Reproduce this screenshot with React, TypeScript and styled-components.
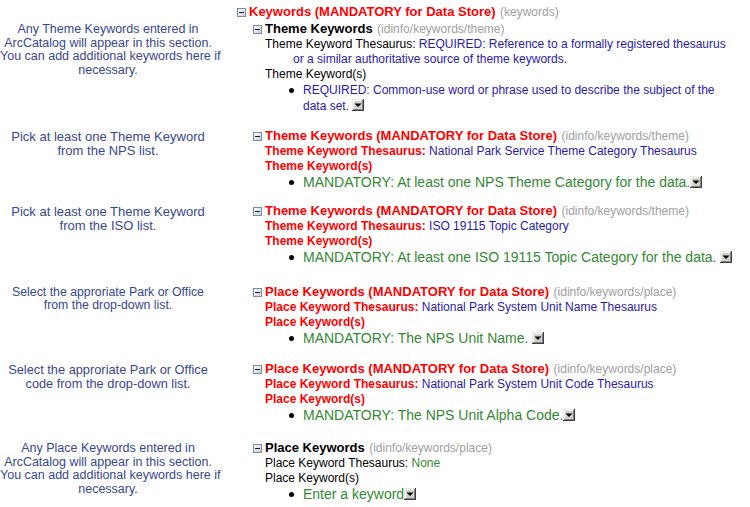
import React from "react";
import styled, { createGlobalStyle, css } from "styled-components";

type Tone = "red" | "blue" | "green" | "black" | "gray";

const tones: Record<Tone, string> = {
  red: "#ff0000",
  blue: "#2a1aa8",
  green: "#338833",
  black: "#000000",
  gray: "#a0a0a0",
};

const GlobalStyle = createGlobalStyle`
  body {
    margin: 0;
    background: #fff;
    font-family: "Liberation Sans", Arial, sans-serif;
  }
`;

const MinusBox: React.FC = () => (
  <MinusSvg width="9" height="9" viewBox="0 0 9 9">
    <defs>
      <linearGradient id="minusFill" x1="0" y1="0" x2="1" y2="1">
        <stop offset="0" stopColor="#ffffff" />
        <stop offset="1" stopColor="#c4cad4" />
      </linearGradient>
    </defs>
    <rect x="0.5" y="0.5" width="8" height="8" fill="url(#minusFill)" stroke="#7d8ca3" />
    <rect x="2" y="4" width="5" height="1" fill="#1a1a1a" />
  </MinusSvg>
);

const DropButton: React.FC = () => (
  <DropSvg width="12" height="12" viewBox="0 0 12 12">
    <rect x="0" y="0" width="12" height="12" fill="#404040" />
    <rect x="0" y="0" width="11" height="11" fill="#e8e6e0" />
    <rect x="1" y="1" width="10" height="10" fill="#808080" />
    <rect x="1" y="1" width="9" height="9" fill="#ffffff" />
    <rect x="2" y="2" width="8" height="8" fill="#d4d0c8" />
    <polygon points="2.5,4.5 9.5,4.5 6,8" fill="#000" />
  </DropSvg>
);

type SectionProps = {
  gap: number;
  hint: React.ReactNode;
  hintSize: number;
  title: string;
  titleTone: Tone;
  path: string;
  children: React.ReactNode;
};

const Section: React.FC<SectionProps> = ({ gap, hint, hintSize, title, titleTone, path, children }) => (
  <Row $gap={gap}>
    <Hint $size={hintSize}>{hint}</Hint>
    <Branch>
      <Head>
        <MinusBox />
        <Title $tone={titleTone}>{title}</Title> <Path>{path}</Path>
      </Head>
      <Body>{children}</Body>
    </Branch>
  </Row>
);

export default function App() {
  return (
    <Page>
      <GlobalStyle />
      <Row $gap={0}>
        <Hint $size={12} />
        <Head>
          <MinusBox />
          <Title $tone="red">Keywords (MANDATORY for Data Store)</Title> <Path>(keywords)</Path>
        </Head>
      </Row>

      <Section
        gap={0}
        hintSize={12.5}
        hint={
          <>
            Any Theme Keywords entered in
            <br />
            ArcCatalog will appear in this section.
            <br />
            You can add additional keywords here if
            <br />
            necessary.
          </>
        }
        title="Theme Keywords"
        titleTone="black"
        path="(idinfo/keywords/theme)"
      >
        <Line $hang>
          <Label $tone="black">Theme Keyword Thesaurus:</Label>{" "}
          <Value $tone="blue">
            REQUIRED: Reference to a formally registered thesaurus
            <br />
            or a similar authoritative source of theme keywords.
          </Value>
        </Line>
        <Line>
          <Label $tone="black">Theme Keyword(s)</Label>
        </Line>
        <Item>
          <Dot />
          <ItemText $size={12} $tone="blue">
            REQUIRED: Common-use word or phrase used to describe the subject of the
            <br />
            data set. <DropButton />
          </ItemText>
        </Item>
      </Section>

      <Section
        gap={13}
        hintSize={13}
        hint={
          <>
            Pick at least one Theme Keyword
            <br />
            from the NPS list.
          </>
        }
        title="Theme Keywords (MANDATORY for Data Store)"
        titleTone="red"
        path="(idinfo/keywords/theme)"
      >
        <Line>
          <Label $tone="red" $bold>Theme Keyword Thesaurus:</Label>{" "}
          <Value $tone="blue">National Park Service Theme Category Thesaurus</Value>
        </Line>
        <Line>
          <Label $tone="red" $bold>Theme Keyword(s)</Label>
        </Line>
        <Item>
          <Dot />
          <ItemText $size={14} $tone="green">
            MANDATORY: At least one NPS Theme Category for the data.<DropButton />
          </ItemText>
        </Item>
      </Section>

      <Section
        gap={12}
        hintSize={13}
        hint={
          <>
            Pick at least one Theme Keyword
            <br />
            from the ISO list.
          </>
        }
        title="Theme Keywords (MANDATORY for Data Store)"
        titleTone="red"
        path="(idinfo/keywords/theme)"
      >
        <Line>
          <Label $tone="red" $bold>Theme Keyword Thesaurus:</Label>{" "}
          <Value $tone="blue">ISO 19115 Topic Category</Value>
        </Line>
        <Line>
          <Label $tone="red" $bold>Theme Keyword(s)</Label>
        </Line>
        <Item>
          <Dot />
          <ItemText $size={14} $tone="green">
            MANDATORY: At least one ISO 19115 Topic Category for the data. <DropButton />
          </ItemText>
        </Item>
      </Section>

      <Section
        gap={18}
        hintSize={12.3}
        hint={
          <>
            Select the approriate Park or Office
            <br />
            from the drop-down list.
          </>
        }
        title="Place Keywords (MANDATORY for Data Store)"
        titleTone="red"
        path="(idinfo/keywords/place)"
      >
        <Line>
          <Label $tone="red" $bold>Place Keyword Thesaurus:</Label>{" "}
          <Value $tone="blue">National Park System Unit Name Thesaurus</Value>
        </Line>
        <Line>
          <Label $tone="red" $bold>Place Keyword(s)</Label>
        </Line>
        <Item>
          <Dot />
          <ItemText $size={14} $tone="green">
            MANDATORY: The NPS Unit Name. <DropButton />
          </ItemText>
        </Item>
      </Section>

      <Section
        gap={14}
        hintSize={12.8}
        hint={
          <>
            Select the approriate Park or Office
            <br />
            code from the drop-down list.
          </>
        }
        title="Place Keywords (MANDATORY for Data Store)"
        titleTone="red"
        path="(idinfo/keywords/place)"
      >
        <Line>
          <Label $tone="red" $bold>Place Keyword Thesaurus:</Label>{" "}
          <Value $tone="blue">National Park System Unit Code Thesaurus</Value>
        </Line>
        <Line>
          <Label $tone="red" $bold>Place Keyword(s)</Label>
        </Line>
        <Item>
          <Dot />
          <ItemText $size={14} $tone="green">
            MANDATORY: The NPS Unit Alpha Code.<DropButton />
          </ItemText>
        </Item>
      </Section>

      <Section
        gap={16}
        hintSize={12.5}
        hint={
          <>
            Any Place Keywords entered in
            <br />
            ArcCatalog will appear in this section.
            <br />
            You can add additional keywords here if
            <br />
            necessary.
          </>
        }
        title="Place Keywords"
        titleTone="black"
        path="(idinfo/keywords/place)"
      >
        <Line>
          <Label $tone="black">Place Keyword Thesaurus:</Label>{" "}
          <Value $tone="green">None</Value>
        </Line>
        <Line>
          <Label $tone="black">Place Keyword(s)</Label>
        </Line>
        <Item>
          <Dot />
          <ItemText $size={14} $tone="green">
            Enter a keyword<DropButton />
          </ItemText>
        </Item>
      </Section>
    </Page>
  );
}

const Page = styled.div`
  width: 750px;
  padding-top: 3px;
`;

const Row = styled.div<{ $gap: number }>`
  display: grid;
  grid-template-columns: 216px 1fr;
  column-gap: 21px;
  margin-top: ${({ $gap }) => $gap}px;
`;

const Hint = styled.div<{ $size: number }>`
  padding-top: 3px;
  text-align: center;
  font-size: ${({ $size }) => $size}px;
  line-height: ${({ $size }) => $size + 1}px;
  color: #37478c;
  white-space: nowrap;
`;

const Branch = styled.div`
  padding-left: 16px;
`;

const Head = styled.div`
  line-height: 16px;
  white-space: nowrap;
`;

const MinusSvg = styled.svg`
  vertical-align: -1px;
  margin-right: 3px;
`;

const DropSvg = styled.svg`
  vertical-align: -1px;
`;

const Title = styled.span<{ $tone: Tone }>`
  font-size: 13px;
  font-weight: bold;
  color: ${({ $tone }) => tones[$tone]};
`;

const Path = styled.span`
  font-size: 12px;
  color: ${tones.gray};
`;

const Body = styled.div`
  padding-left: 12px;
`;

const Line = styled.div<{ $hang?: boolean }>`
  font-size: 12px;
  line-height: 15px;
  white-space: nowrap;

  ${({ $hang }) =>
    $hang &&
    css`
      padding-left: 28px;
      text-indent: -28px;
    `}
`;

const Label = styled.span<{ $tone: Tone; $bold?: boolean }>`
  color: ${({ $tone }) => tones[$tone]};
  font-weight: ${({ $bold }) => ($bold ? "bold" : "normal")};
`;

const Value = styled.span<{ $tone: Tone }>`
  color: ${({ $tone }) => tones[$tone]};
`;

const Item = styled.div`
  display: flex;
  align-items: flex-start;
  gap: 9px;
  padding-left: 24px;
  line-height: 16px;
  white-space: nowrap;
`;

const Dot = styled.span`
  flex: none;
  width: 5px;
  height: 5px;
  margin-top: 6px;
  border-radius: 50%;
  background: #000;
`;

const ItemText = styled.span<{ $size: number; $tone: Tone }>`
  font-size: ${({ $size }) => $size}px;
  color: ${({ $tone }) => tones[$tone]};
`;
